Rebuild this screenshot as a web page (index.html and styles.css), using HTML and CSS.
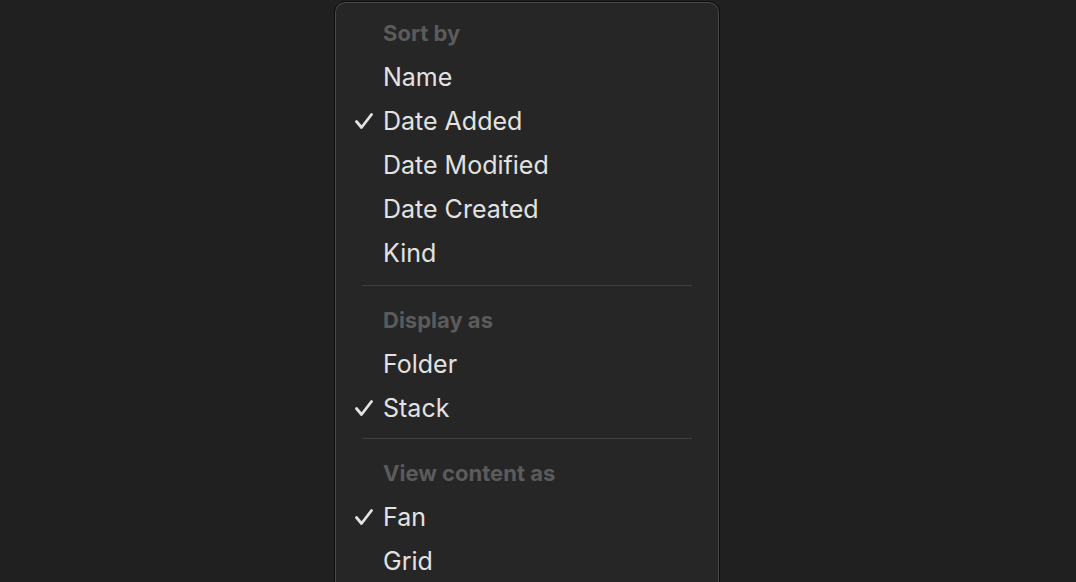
FILE: index.html
```html
<!DOCTYPE html>
<html>
<head>
<meta charset="utf-8">
<link rel="stylesheet" href="styles.css">
</head>
<body>
<div class="menu">
  <div class="section">
    <div class="header">Sort by</div>
    <div class="item">Name</div>
    <div class="item checked"><svg class="check" viewBox="0 0 18 16"><path d="M1.5 8.5 L6.5 14.5 L16.5 1.5"/></svg>Date Added</div>
    <div class="item">Date Modified</div>
    <div class="item">Date Created</div>
    <div class="item">Kind</div>
  </div>
  <div class="sep"></div>
  <div class="section">
    <div class="header">Display as</div>
    <div class="item">Folder</div>
    <div class="item checked"><svg class="check" viewBox="0 0 18 16"><path d="M1.5 8.5 L6.5 14.5 L16.5 1.5"/></svg>Stack</div>
  </div>
  <div class="sep sep-tight"></div>
  <div class="section">
    <div class="header">View content as</div>
    <div class="item checked"><svg class="check" viewBox="0 0 18 16"><path d="M1.5 8.5 L6.5 14.5 L16.5 1.5"/></svg>Fan</div>
    <div class="item">Grid</div>
  </div>
</div>
</body>
</html>
```

FILE: styles.css
```css
html, body {
  margin: 0;
  padding: 0;
  background: #202020;
  height: 100%;
  overflow: hidden;
}
body {
  font-family: Inter, "Liberation Sans", sans-serif;
}
.menu {
  margin-left: 334px;
  margin-top: 1px;
  width: 386px;
  height: 700px;
  background: #262626;
  border: 1px solid #0c0c0c;
  border-radius: 11px;
  box-shadow: inset 0 0 0 1px #4a4a4a;
  padding: 9px 0 0 0;
  box-sizing: border-box;
}
.section {
  display: flex;
  flex-direction: column;
}
.header, .item {
  height: 44px;
  display: flex;
  align-items: center;
  padding-left: 48px;
  position: relative;
  white-space: nowrap;
}
.header {
  color: #5b5b5b;
  font-size: 22px;
  font-weight: 700;
}
.item {
  color: #e2e2e2;
  font-size: 25px;
  font-weight: 400;
}
.check {
  position: absolute;
  left: 20px;
  top: 14px;
  width: 18px;
  height: 16px;
  fill: none;
  stroke: #e2e2e2;
  stroke-width: 2.8;
  stroke-linecap: round;
  stroke-linejoin: round;
}
.sep {
  height: 1px;
  background: #3f3f3f;
  margin: 10px 27px 12px 27px;
}
.sep-tight {
  margin-top: 8px;
}
```
